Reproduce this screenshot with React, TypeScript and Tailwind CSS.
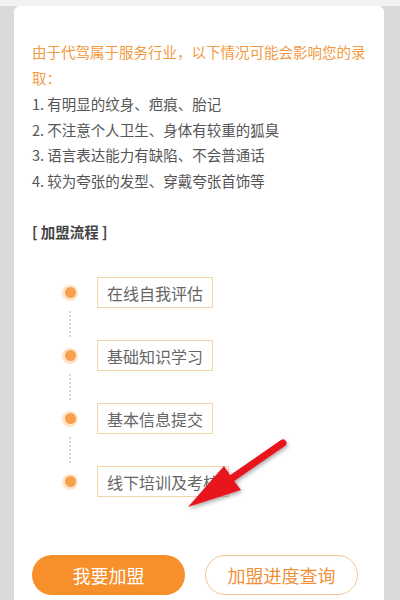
import React from "react";

const steps = ["在线自我评估", "基础知识学习", "基本信息提交", "线下培训及考核"];
const rules = [
  "1. 有明显的纹身、疤痕、胎记",
  "2. 不注意个人卫生、身体有较重的狐臭",
  "3. 语言表达能力有缺陷、不会普通话",
  "4. 较为夸张的发型、穿戴夸张首饰等",
];

export default function App() {
  return (
    <div
      className="relative w-[400px] h-[600px] overflow-hidden bg-[#dadada] flex flex-col"
      style={{ fontFamily: '"Noto Sans CJK SC", "Noto Sans", sans-serif' }}
    >
      <div className="h-[6px] bg-[#f2f2f2] shrink-0" />
      <div className="ml-[14px] w-[370px] flex-1 bg-white rounded-t-[6px] pt-[33px] pl-[18px] flex flex-col">
        <p className="w-[340px] text-[14.5px] leading-[26px] text-[#f29a45]">
          由于代驾属于服务行业，以下情况可能会影响您的录取：
        </p>
        <div className="text-[14.5px] leading-[25.5px] text-[#555555]">
          {rules.map((r) => (
            <div key={r}>{r}</div>
          ))}
        </div>
        <div className="mt-[26px] text-[14.5px] leading-[26px] font-bold text-[#444444]">[ 加盟流程 ]</div>
        <div className="mt-[32px] ml-[30px] flex flex-col">
          {steps.map((s, i) => (
            <React.Fragment key={s}>
              {i > 0 && (
                <div className="h-[32px] w-[16px] flex items-center justify-center">
                  <div className="h-[26px] border-l-2 border-dotted border-[#d9d9d9]" />
                </div>
              )}
              <div className="flex items-center gap-[19px]">
                <div className="w-[16px] h-[16px] rounded-full bg-[#fde4cb] flex items-center justify-center">
                  <div className="w-[11px] h-[11px] rounded-full bg-[#f7a04b]" />
                </div>
                <div className="h-[31px] px-[9px] flex items-center border border-[#f3d4ab] text-[16px] text-[#666666] whitespace-nowrap">
                  {s}
                </div>
              </div>
            </React.Fragment>
          ))}
        </div>
        <div className="mt-[58px] flex gap-[20px]">
          <button className="w-[153px] h-[40px] rounded-full bg-[#f78f2a] text-white text-[18px] flex items-center justify-center">
            我要加盟
          </button>
          <button className="w-[153px] h-[40px] rounded-full border border-[#f3c697] bg-white text-[#f0913a] text-[18px] flex items-center justify-center">
            加盟进度查询
          </button>
        </div>
      </div>
      <svg className="absolute left-0 top-0 pointer-events-none" width="400" height="600" viewBox="0 0 400 600">
        <defs>
          <filter id="sh" x="-20%" y="-20%" width="140%" height="140%">
            <feDropShadow dx="1" dy="2" stdDeviation="2" floodColor="#000" floodOpacity="0.35" />
          </filter>
        </defs>
        <g filter="url(#sh)">
          <line x1="283" y1="443" x2="228" y2="481" stroke="#e8141b" strokeWidth="7" strokeLinecap="round" />
          <polygon points="188,507 224,466 232,478 241,490" fill="#e8141b" />
        </g>
      </svg>
    </div>
  );
}
